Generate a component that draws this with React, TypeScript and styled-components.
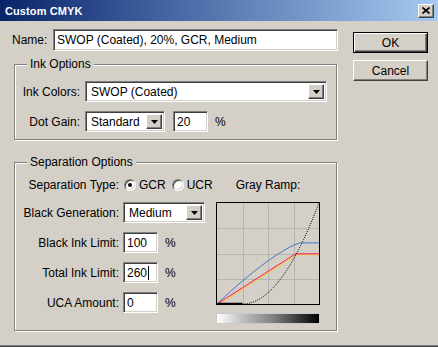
import styled, { createGlobalStyle, css } from "styled-components";

const GlobalStyle = createGlobalStyle`
  html, body {
    margin: 0;
    padding: 0;
    background: #d4d0c8;
  }
  * {
    box-sizing: border-box;
  }
`;

const sunken = css`
  border: 1px solid;
  border-color: #808080 #ffffff #ffffff #808080;
  box-shadow: inset 1px 1px 0 #404040, inset -1px -1px 0 #d4d0c8;
`;

const raised = css`
  border: 1px solid;
  border-color: #ffffff #404040 #404040 #ffffff;
  box-shadow: inset -1px -1px 0 #808080;
  background: #d4d0c8;
`;

const GRAPH_W = 102;
const GRAPH_H = 101;

const pts = (fn: (x: number) => number, from = 0, to = 1, steps = 60) => {
  const out: string[] = [];
  for (let i = 0; i <= steps; i++) {
    const fx = from + ((to - from) * i) / steps;
    const fy = fn(fx);
    out.push(`${(fx * GRAPH_W).toFixed(2)},${(GRAPH_H - fy * GRAPH_H).toFixed(2)}`);
  }
  return out.join(" ");
};

const cyanCurve = (x: number) =>
  x >= 0.82 ? 0.605 : 0.605 * (1 - Math.pow(1 - x / 0.82, 1.3));
const magentaCurve = (x: number) => (x >= 0.77 ? 0.497 : (0.497 / 0.77) * x);
const blackCurve = (x: number) => (x <= 0.25 ? 0 : Math.pow((x - 0.25) / 0.75, 2));

const App = () => {
  return (
    <>
      <GlobalStyle />
      <Window>
        <TitleBar>
          <Title>Custom CMYK</Title>
          <CloseButton>
            <svg width="8" height="7" viewBox="0 0 8 7">
              <path d="M0.5 0.5 L7.5 6.5 M7.5 0.5 L0.5 6.5" stroke="#000" strokeWidth="1.6" />
            </svg>
          </CloseButton>
        </TitleBar>
        <Content>
          <LeftCol>
            <NameRow>
              <span>Name:</span>
              <TextBox $width={285} $height={22}>
                SWOP (Coated), 20%, GCR, Medium
              </TextBox>
            </NameRow>

            <GroupBox $height={76} $top={13}>
              <Legend>Ink Options</Legend>
              <InkGrid>
                <Label>Ink Colors:</Label>
                <Select value="SWOP (Coated)" width={242} />
                <Label>Dot Gain:</Label>
                <Inline>
                  <Select value="Standard" width={80} />
                  <TextBox $width={35} $left={8}>
                    20
                  </TextBox>
                  <Percent>%</Percent>
                </Inline>
              </InkGrid>
            </GroupBox>

            <GroupBox $height={169} $top={22}>
              <Legend>Separation Options</Legend>
              <SepBody>
                <SepGrid>
                  <Label>Separation Type:</Label>
                  <Inline>
                    <Radio $checked />
                    <RadioText>GCR</RadioText>
                    <Radio />
                    <RadioText>UCR</RadioText>
                  </Inline>
                  <Label>Black Generation:</Label>
                  <Select value="Medium" width={82} />
                  <Label>Black Ink Limit:</Label>
                  <Inline>
                    <TextBox $width={35}>100</TextBox>
                    <Percent>%</Percent>
                  </Inline>
                  <Label>Total Ink Limit:</Label>
                  <Inline>
                    <TextBox $width={35}>
                      260
                      <Caret />
                    </TextBox>
                    <Percent>%</Percent>
                  </Inline>
                  <Label>UCA Amount:</Label>
                  <Inline>
                    <TextBox $width={35}>0</TextBox>
                    <Percent>%</Percent>
                  </Inline>
                </SepGrid>

                <RampCol>
                  <RampLabel>Gray Ramp:</RampLabel>
                  <Graph>
                    <svg width={GRAPH_W} height={GRAPH_H} viewBox={`0 0 ${GRAPH_W} ${GRAPH_H}`}>
                      {[0.25, 0.5, 0.75].map((f) => (
                        <g key={f} stroke="#b4b4b4" strokeWidth="1">
                          <line x1={Math.round(f * GRAPH_W) + 0.5} y1="0" x2={Math.round(f * GRAPH_W) + 0.5} y2={GRAPH_H} />
                          <line x1="0" y1={Math.round(f * GRAPH_H) + 0.5} x2={GRAPH_W} y2={Math.round(f * GRAPH_H) + 0.5} />
                        </g>
                      ))}
                      <polyline points={pts(cyanCurve)} fill="none" stroke="#3f72c6" strokeWidth="1" />
                      <polyline
                        points={pts(magentaCurve)}
                        fill="none"
                        stroke="#ffcc00"
                        strokeWidth="0.9"
                        transform="translate(1 0.9)"
                      />
                      <polyline points={pts(magentaCurve)} fill="none" stroke="#ff0a6c" strokeWidth="1" />
                      <line x1="0" y1={GRAPH_H - 0.5} x2={0.25 * GRAPH_W} y2={GRAPH_H - 0.5} stroke="#000" strokeWidth="1.5" />
                      <polyline
                        points={pts(blackCurve, 0.25, 1)}
                        fill="none"
                        stroke="#000"
                        strokeWidth="1"
                        strokeDasharray="1 1.2"
                      />
                    </svg>
                  </Graph>
                  <RampBar />
                </RampCol>
              </SepBody>
            </GroupBox>
          </LeftCol>

          <RightCol>
            <Button $default>OK</Button>
            <Button>Cancel</Button>
          </RightCol>
        </Content>
      </Window>
    </>
  );
};

const Select = ({ value, width }: { value: string; width: number }) => (
  <SelectBox $width={width}>
    <SelectValue>{value}</SelectValue>
    <DropButton>
      <svg width="7" height="4" viewBox="0 0 7 4">
        <path d="M0 0 H7 L3.5 4 Z" fill="#000" />
      </svg>
    </DropButton>
  </SelectBox>
);

const Window = styled.div`
  width: 438px;
  height: 347px;
  background: #d4d0c8;
  display: flex;
  flex-direction: column;
  font-family: "Liberation Sans", Arial, sans-serif;
  font-size: 12px;
  color: #000;
  box-shadow: inset 0 -1px 0 #404040, inset 0 -2px 0 #808080;
  overflow: hidden;
`;

const TitleBar = styled.div`
  height: 21px;
  flex: none;
  display: flex;
  align-items: center;
  justify-content: space-between;
  padding: 0 4px 0 5px;
  background: linear-gradient(to right, #0a246a 0%, #4668a4 40%, #a6caf0 100%);
`;

const Title = styled.span`
  color: #fff;
  font-weight: bold;
  font-size: 11px;
  letter-spacing: 0.1px;
`;

const CloseButton = styled.div`
  ${raised};
  width: 16px;
  height: 14px;
  display: flex;
  align-items: center;
  justify-content: center;
`;

const Content = styled.div`
  display: flex;
  padding: 8px 0 0 12px;
  gap: 15px;
`;

const LeftCol = styled.div`
  width: 326px;
  display: flex;
  flex-direction: column;
`;

const NameRow = styled.div`
  display: flex;
  align-items: center;
  justify-content: space-between;
  height: 22px;
`;

const TextBox = styled.div<{ $width: number; $height?: number; $left?: number }>`
  ${sunken};
  background: #fff;
  width: ${(p) => p.$width}px;
  height: ${(p) => p.$height ?? 21}px;
  margin-left: ${(p) => p.$left ?? 0}px;
  padding: 0 3px;
  display: flex;
  align-items: center;
  white-space: nowrap;
`;

const Caret = styled.span`
  display: inline-block;
  width: 1px;
  height: 14px;
  margin-left: 1px;
  background: #000;
`;

const GroupBox = styled.div<{ $height: number; $top: number }>`
  position: relative;
  margin: ${(p) => p.$top}px 0 0 2px;
  width: 323px;
  height: ${(p) => p.$height}px;
  border: 1px solid #808080;
  box-shadow: 1px 1px 0 #fff, inset 1px 1px 0 #fff;
`;

const Legend = styled.span`
  position: absolute;
  top: -8px;
  left: 12px;
  padding: 0 3px;
  line-height: 14px;
  background: #d4d0c8;
`;

const InkGrid = styled.div`
  display: grid;
  grid-template-columns: 58px auto;
  grid-template-rows: 21px 21px;
  column-gap: 5px;
  row-gap: 9px;
  align-items: center;
  padding: 16px 0 0 7px;
`;

const Label = styled.span`
  text-align: right;
  white-space: nowrap;
`;

const Inline = styled.div`
  display: flex;
  align-items: center;
`;

const Percent = styled.span`
  margin-left: 7px;
`;

const SelectBox = styled.div<{ $width: number }>`
  ${sunken};
  background: #fff;
  width: ${(p) => p.$width}px;
  height: 21px;
  display: flex;
  align-items: stretch;
  padding: 2px;
`;

const SelectValue = styled.span`
  flex: 1;
  display: flex;
  align-items: center;
  padding-left: 3px;
  white-space: nowrap;
`;

const DropButton = styled.div`
  ${raised};
  width: 16px;
  display: flex;
  align-items: center;
  justify-content: center;
`;

const SepBody = styled.div`
  display: flex;
  padding: 14px 0 0 7px;
`;

const SepGrid = styled.div`
  width: 194px;
  display: grid;
  grid-template-columns: 97px auto;
  grid-template-rows: 16px 21px 21px 21px 21px;
  column-gap: 4px;
  row-gap: 9px;
  align-items: center;
`;

const Radio = styled.span<{ $checked?: boolean }>`
  position: relative;
  display: inline-block;
  width: 12px;
  height: 12px;
  margin-left: 1px;
  border-radius: 50%;
  background: #fff;
  border: 1px solid;
  border-color: #808080 #ffffff #ffffff #808080;
  box-shadow: inset 1px 1px 0 #404040, inset -1px -1px 0 #d4d0c8;
  &::after {
    content: "";
    position: absolute;
    left: 3px;
    top: 3px;
    width: 4px;
    height: 4px;
    border-radius: 50%;
    background: #000;
    display: ${(p) => (p.$checked ? "block" : "none")};
  }
`;

const RadioText = styled.span`
  margin: 0 5px 0 3px;
`;

const RampCol = styled.div`
  width: 104px;
  display: flex;
  flex-direction: column;
  align-items: center;
`;

const RampLabel = styled.span`
  line-height: 16px;
  margin-bottom: 9px;
`;

const Graph = styled.div`
  width: 104px;
  height: 103px;
  border: 1px solid #000;
  background: #d4d0c8;
  svg {
    display: block;
  }
`;

const RampBar = styled.div`
  width: 104px;
  height: 11px;
  margin-top: 8px;
  border: 1px solid #c8c8c8;
  background: linear-gradient(to right, #ffffff 0%, #c0c0c0 25%, #808080 55%, #000000 100%);
`;

const RightCol = styled.div`
  display: flex;
  flex-direction: column;
  gap: 7px;
  margin-top: 3px;
`;

const Button = styled.div<{ $default?: boolean }>`
  width: 75px;
  height: 21px;
  display: flex;
  align-items: center;
  justify-content: center;
  background: #d4d0c8;
  ${(p) =>
    p.$default
      ? css`
          border: 1px solid #000;
          box-shadow: inset 1px 1px 0 #fff, inset -1px -1px 0 #404040, inset -2px -2px 0 #808080;
        `
      : raised};
`;

export default App;
